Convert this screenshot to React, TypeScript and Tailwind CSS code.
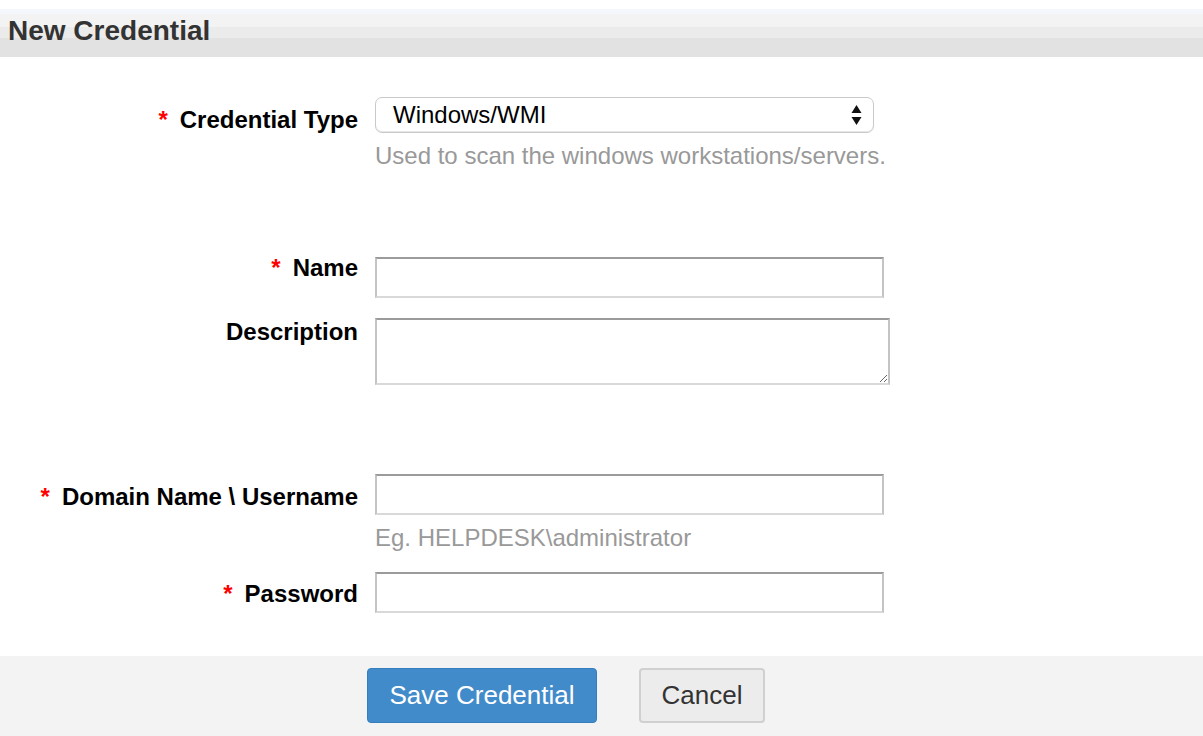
import React from "react";

const font = { fontFamily: '"Liberation Sans", Arial, Helvetica, sans-serif' };

function Label({ text, required, pt }: { text: string; required?: boolean; pt: string }) {
  return (
    <div className={`w-[358px] shrink-0 text-right text-[24px] leading-[28px] font-bold text-black ${pt}`}>
      {required && <span className="text-[#ff0000] mr-[12px]">*</span>}
      {text}
    </div>
  );
}

const inputCls =
  "block w-[509px] h-[41px] bg-white border-2 border-t-[#9b9b9b] border-x-[#c4c4c4] border-b-[#d9d9d9] outline-none px-2 text-[22px]";

export default function App() {
  return (
    <div className="w-[1203px] h-[736px] bg-white flex flex-col overflow-hidden" style={font}>
      <div className="h-[9px] shrink-0" />
      <div className="h-[48px] shrink-0 bg-[linear-gradient(to_bottom,#f4f7fb_0px,#f4f7fb_5px,#f3f3f3_5px,#f3f3f3_18px,#ebebeb_18px,#ebebeb_29px,#e2e2e2_29px)] pl-[8px] pt-[6px]">
        <span className="text-[28px] leading-[32px] font-bold text-[#333333]">New Credential</span>
      </div>

      <div className="flex-1 flex flex-col">
        {/* Credential Type */}
        <div className="flex gap-[17px] mt-[40px]">
          <Label text="Credential Type" required pt="pt-[9px]" />
          <div className="flex flex-col">
            <div className="w-[499px] h-[36px] rounded-[7px] border border-[#c9c9c9] bg-white shadow-[inset_0_-1px_0_#e6e6e6] flex items-center justify-between pl-[17px] pr-[11px]">
              <span className="text-[24px] leading-[28px] text-black">Windows/WMI</span>
              <svg width="11" height="22" viewBox="0 0 11 22">
                <path d="M5.5 1 L10.5 9 H0.5 Z" fill="#111" />
                <path d="M5.5 21 L10.5 13 H0.5 Z" fill="#111" />
              </svg>
            </div>
            <div className="mt-[9px] text-[24px] leading-[28px] text-[#999999]">
              Used to scan the windows workstations/servers.
            </div>
          </div>
        </div>

        {/* Name */}
        <div className="flex gap-[17px] mt-[87px]">
          <Label text="Name" required pt="-mt-[3px]" />
          <input className={inputCls} />
        </div>

        {/* Description */}
        <div className="flex gap-[17px] mt-[20px]">
          <Label text="Description" pt="pt-0" />
          <textarea className="block w-[515px] h-[67px] bg-white border-2 border-t-[#9b9b9b] border-x-[#c4c4c4] border-b-[#d9d9d9] outline-none px-2 text-[22px]" />
        </div>

        {/* Domain */}
        <div className="flex gap-[17px] mt-[89px]">
          <Label text="Domain Name \ Username" required pt="pt-[9px]" />
          <div className="flex flex-col">
            <input className={inputCls} />
            <div className="mt-[9px] text-[24px] leading-[28px] text-[#999999]">Eg. HELPDESK\administrator</div>
          </div>
        </div>

        {/* Password */}
        <div className="flex gap-[17px] mt-[20px]">
          <Label text="Password" required pt="pt-[8px]" />
          <input type="password" className={inputCls} />
        </div>
      </div>

      <div className="h-[80px] shrink-0 bg-[#f3f3f3] flex pt-[12px] pl-[367px] gap-[42px]">
        <button className="h-[55px] w-[230px] rounded-[4px] bg-[#428bca] border border-[#357ebd] text-white text-[26px]">
          Save Credential
        </button>
        <button className="h-[55px] w-[126px] rounded-[4px] bg-[#ececec] border-2 border-[#d0d0d0] text-[#333333] text-[26px]">
          Cancel
        </button>
      </div>
    </div>
  );
}
